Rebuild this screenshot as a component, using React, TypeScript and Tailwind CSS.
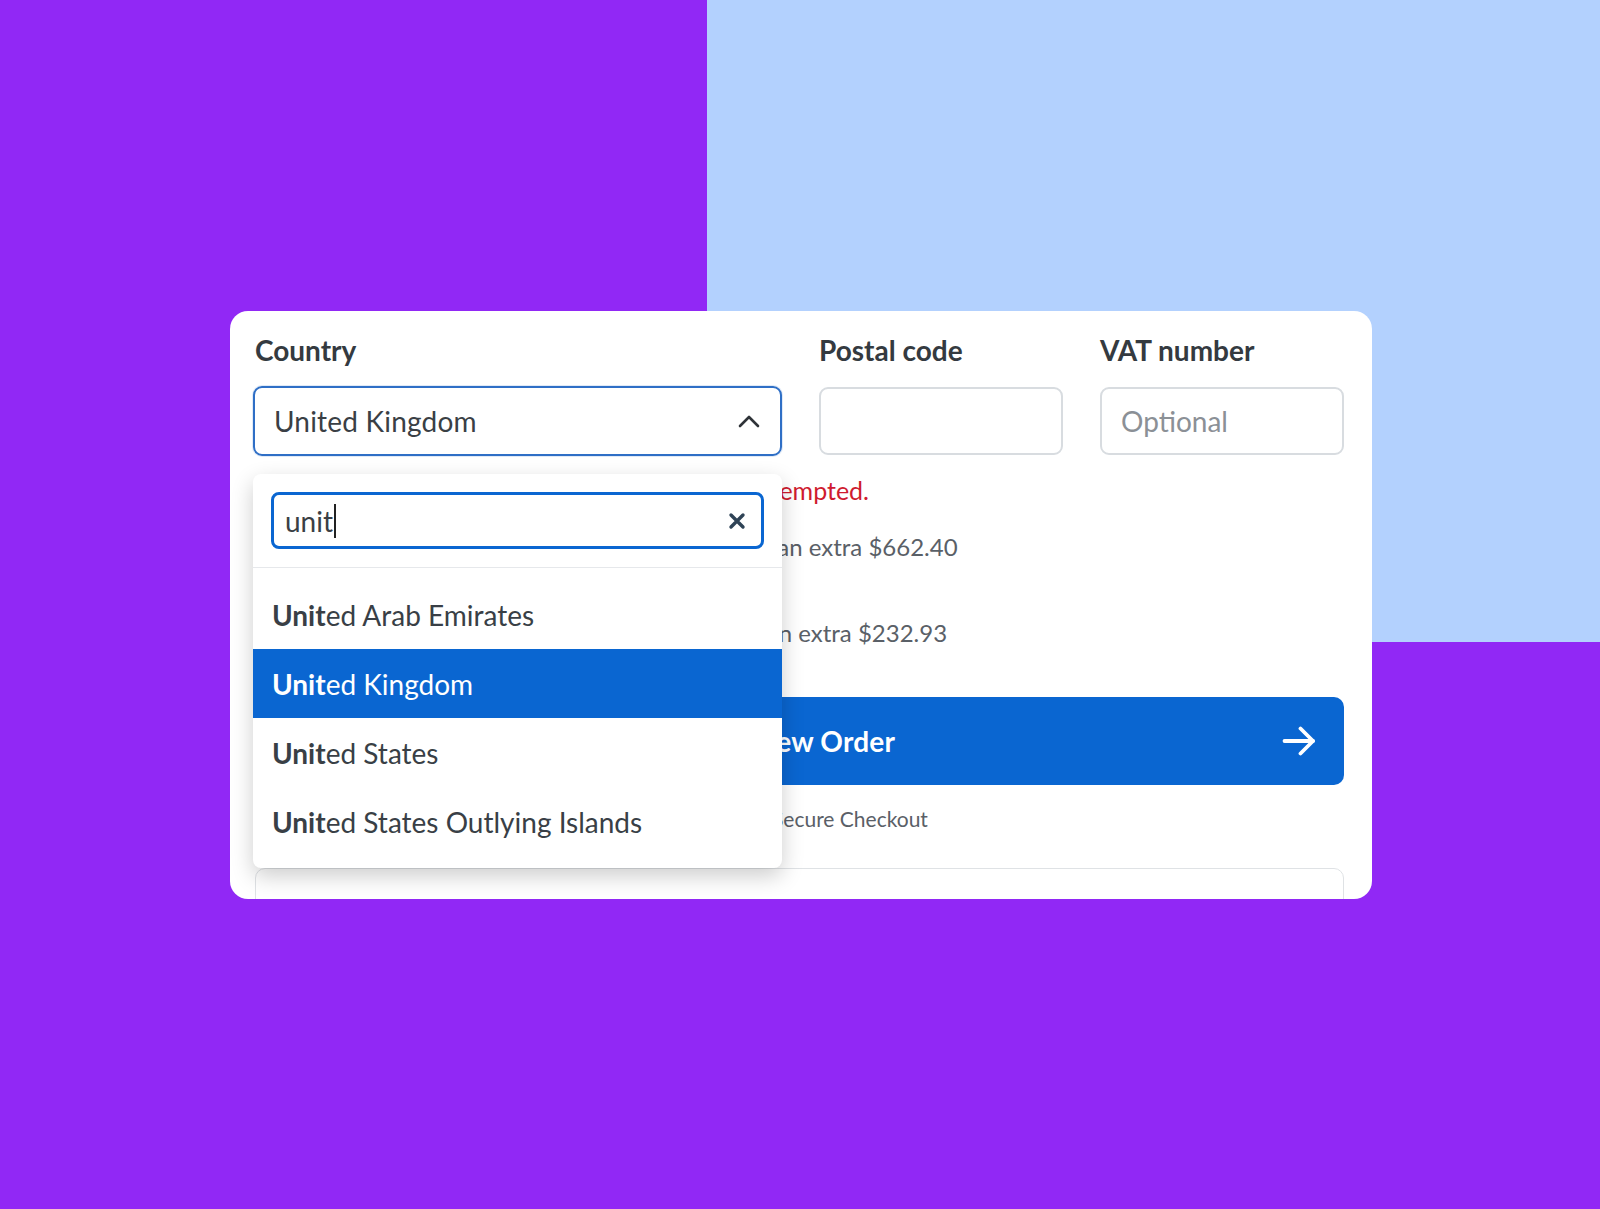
import React from 'react';

const matches = [
  'United Arab Emirates',
  'United Kingdom',
  'United States',
  'United States Outlying Islands',
];

const query = 'Unit';

function ChevronUp() {
  return (
    <svg width="22" height="13" viewBox="0 0 22 13" fill="none" stroke="currentColor" strokeWidth="2.6" strokeLinecap="round" strokeLinejoin="round">
      <path d="M2 11 L11 2 L20 11" />
    </svg>
  );
}

function ClearIcon() {
  return (
    <svg width="18" height="18" viewBox="0 0 18 18" fill="none" stroke="currentColor" strokeWidth="3.4" strokeLinecap="round">
      <path d="M3 3 L15 15 M15 3 L3 15" />
    </svg>
  );
}

function ArrowRight() {
  return (
    <svg width="34" height="30" viewBox="0 0 34 30" fill="none" stroke="currentColor" strokeWidth="3.8" strokeLinecap="round" strokeLinejoin="round">
      <path d="M2.5 15 H31" />
      <path d="M18.5 2.5 L31 15 L18.5 27.5" />
    </svg>
  );
}

function Option({ name, active }: { name: string; active: boolean }) {
  return (
    <div
      className={
        active
          ? 'flex h-[69px] items-center whitespace-pre bg-[#0a66d1] pl-[19px] text-white'
          : 'flex h-[69px] items-center whitespace-pre pl-[19px] text-[#393f46]'
      }
    >
      <b className="font-bold">{name.slice(0, query.length)}</b>
      {name.slice(query.length)}
    </div>
  );
}

export default function App() {
  return (
    <div className="relative min-h-[1209px] w-full overflow-hidden bg-[#9128f5] font-['Lato',sans-serif]">
      {/* backdrop block behind the card */}
      <div className="absolute right-0 top-0 h-[642px] left-[707px] bg-[#b3d1fe]" />

      <div className="relative pl-[230px] pt-[311px]">
        <div className="h-[588px] w-[1142px] overflow-hidden rounded-[18px] bg-white pl-[23px] pr-[28px] pt-[22px]">
          <div className="grid grid-cols-[529px_244px_244px] gap-x-[37px]">
            <div className="relative">
              <div className="mb-[19px] pl-[2px] text-[28px] font-bold leading-[34px] text-[#343a40]">Country</div>
              <div className="flex h-[70px] items-center justify-between rounded-[9px] border-2 border-[#2f6fc6] pl-[19px] pr-[20px] text-[28px] tracking-[0.2px] text-[#3a3f45] shadow-[0_0_0_1px_rgba(47,111,198,0.15)]">
                <span>United Kingdom</span>
                <span className="text-[#2f3338]">
                  <ChevronUp />
                </span>
              </div>

              {/* open listbox */}
              <div className="absolute left-0 right-0 top-[141px] z-10 rounded-[8px] bg-white shadow-[0_8px_22px_rgba(0,0,0,0.2)]">
                <div className="px-[18px] pb-[18px] pt-[18px]">
                  <div className="flex h-[57px] items-center justify-between rounded-[8px] border-[3px] border-[#0a66d1] pl-[11px] pr-[15px] text-[28px] text-[#3a3f45]">
                    <div className="flex items-center">
                      <span>unit</span>
                      <span className="ml-[1px] h-[34px] w-[2px] bg-[#222]" />
                    </div>
                    <span className="text-[#2f4356]">
                      <ClearIcon />
                    </span>
                  </div>
                </div>
                <div className="h-px bg-[#e6e8eb]" />
                <div className="py-[12px] text-[28px]">
                  {matches.map((m) => (
                    <Option key={m} name={m} active={m === 'United Kingdom'} />
                  ))}
                </div>
              </div>
            </div>

            <div>
              <div className="mb-[20px] text-[28px] font-bold leading-[34px] text-[#343a40]">Postal code</div>
              <div className="h-[68px] rounded-[9px] border-2 border-[#d8dce0]" />
            </div>

            <div>
              <div className="mb-[20px] text-[28px] font-bold leading-[34px] text-[#343a40]">VAT number</div>
              <div className="flex h-[68px] items-center rounded-[9px] border-2 border-[#d8dce0] pl-[19px] text-[28px] text-[#8b9096]">
                Optional
              </div>
            </div>
          </div>

          <p className="mt-[18px] whitespace-nowrap pl-[7px] text-[25px] leading-[32px] text-[#cf1b2f]">
            Enter a postal code so tax calculation can be attempted.
          </p>
          <p className="mt-[25px] whitespace-nowrap pl-[103px] text-[24px] leading-[32px] text-[#5a6067]">
            Express delivery in 1–2 business days is an extra $662.40
          </p>
          <p className="mt-[54px] whitespace-nowrap pl-[80px] text-[24px] leading-[32px] text-[#5a6067]">
            Standard delivery in 3–5 business days is an extra $232.93
          </p>

          <button className="mt-[48px] flex h-[88px] w-full items-center justify-between rounded-[10px] bg-[#0a66d1] pl-[28px] pr-[28px] text-white">
            <span className="w-[34px]" />
            <span className="ml-[20px] text-[28px] font-bold tracking-[0.2px]">Review Order</span>
            <ArrowRight />
          </button>

          <p className="mt-[21px] pl-[519px] text-[21px] leading-[26px] text-[#5a6067]">Secure Checkout</p>

          <div className="ml-[2px] mt-[36px] h-[60px] rounded-[10px] border border-[#dfe2e5]" />
        </div>
      </div>
    </div>
  );
}
